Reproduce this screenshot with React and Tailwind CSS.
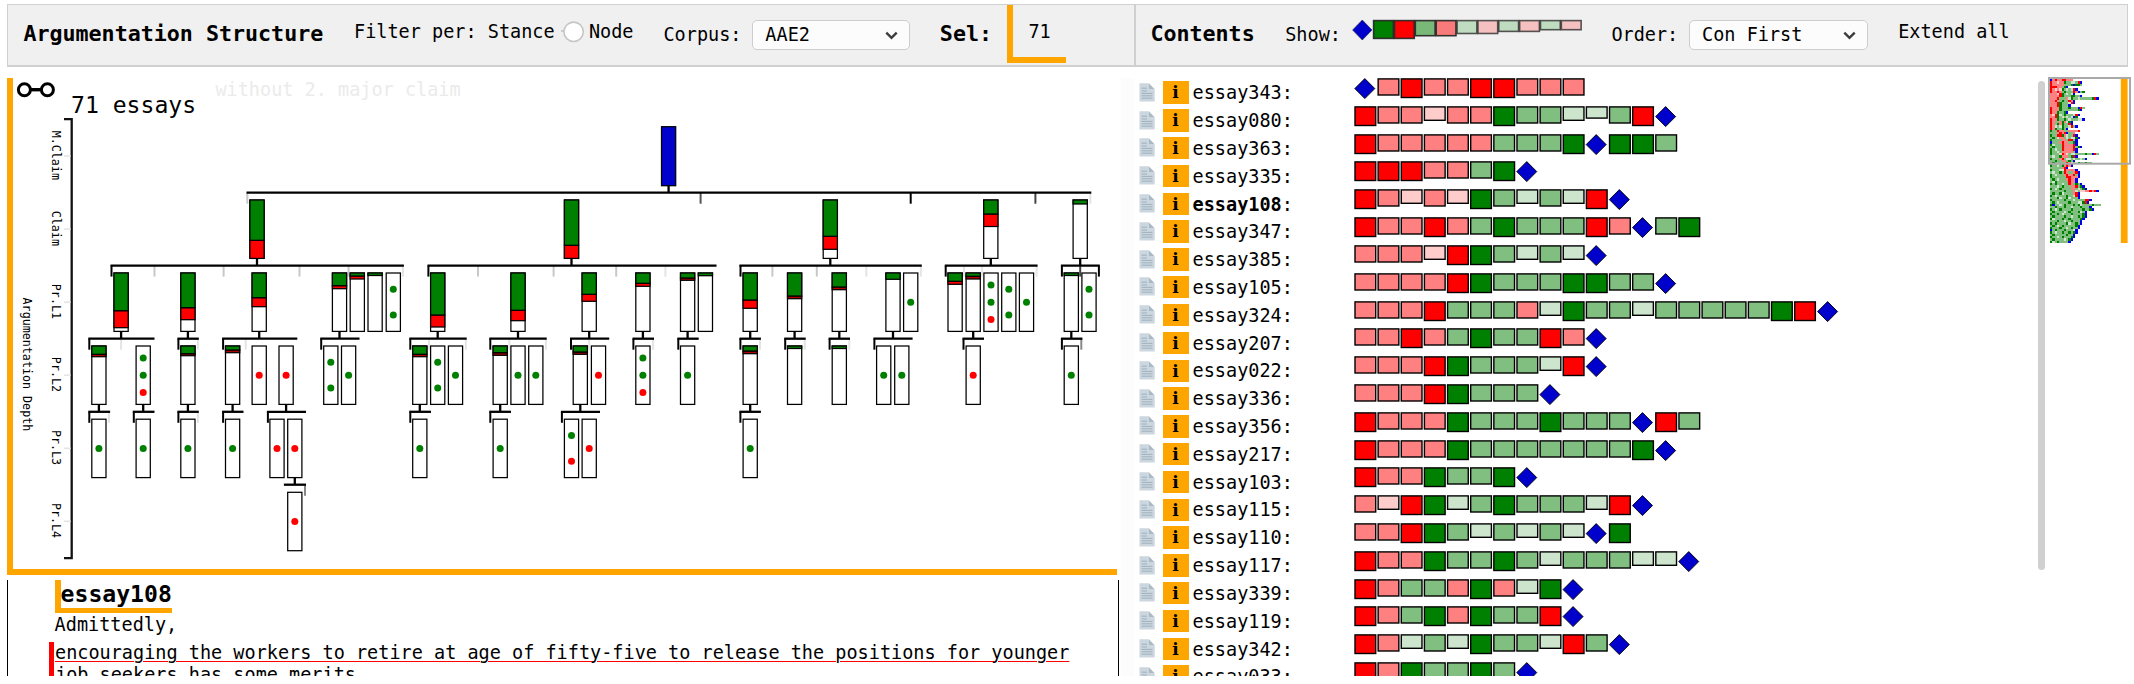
import React from "react";

const MONO = "font-['DejaVu_Sans_Mono',monospace]";

const GLYPHS = {
  R: ["#ff0000", 19.2],
  r: ["#ff8080", 16.7],
  p: ["#ffcccc", 14],
  G: ["#008000", 19.2],
  g: ["#80bf80", 16.7],
  q: ["#cce5cc", 14],
  s: ["#cce5cc", 11.8],
};

const ESSAYS = [
  ["343", "DrRrrRRrrr"],
  ["080", "RrrprrGggqsgRD"],
  ["363", "RrrrrrgggGDGGg"],
  ["335", "RRRrrgGD"],
  ["108", "RrprpGgqgqRD"],
  ["347", "RrrRrgGgggRrDgG"],
  ["385", "rrrpRGgqgqD"],
  ["105", "rrrrRGgggGGggD"],
  ["324", "rrrRgggrqGggqgggggGRD"],
  ["207", "rrRrgGggRrD"],
  ["022", "rrrRGgggqRD"],
  ["336", "rrrRGgggD"],
  ["356", "RrrrGgggGgggDRg"],
  ["217", "RrrrGgggggggGD"],
  ["103", "RrrGggGD"],
  ["115", "rpRGqgGgggqRD"],
  ["110", "rrRGgqgqgqDG"],
  ["117", "RrrGggGgqgggqqD"],
  ["339", "RrggrGrqGD"],
  ["119", "RrgGrGggRD"],
  ["342", "RrqgqGggqRgD"],
  ["033", "RrGggGgD"],
];

const MORE = [
  "GggRrrggrrrrR", "gggrRrRDggr", "GggRRGrqggRD", "gGgqrrgqgqqGD", "GggggrrgRRgD",
  "DgggrRrrggGD", "GqgggRrrrrRD", "gGgggRrrrrRgGD", "GgqggRrrrrRD", "GggqgrrrrrgD",
  "GgggpRrpgqqggggGggDRg", "gqggGrrrgGRD", "GgggrRgqqgqggqgD", "ggGggrrgGgD", "gGgggggRrqgqGggGgg",
  "GggqgGrRrD", "gggggrRD", "GgggqqRrrrrD", "gqggGgRrggrRD", "GgqgggrRrrRgD",
  "GggggggRRrrrD", "gGgqgggrRrrD", "gqGgggggRrrD", "GgGggqggRrgGgD", "gggqgGgggrrRgGD",
  "GgqgGggggrrgqgGD", "ggggggGgggrqgpprrRrRD", "gGggGqggggrRD", "GgqggggGggqRD", "gggGqggGqgggD",
  "GgggggGgggqggggRRD", "gGgqggggGgggqqGRD", "GDggqgGgggGgGqggggGggg", "ggGgggGggqgggGgggD", "GgqgGggggGggggGggGD",
  "gGggggqgGgggGqgD", "GggGgqgggGggggGD", "gGggggGggqggGgGD", "GqgggGggGggggGD", "gggGggqggGgggD",
  "GgGggggGqggGgD", "gGgqgGgggggGD", "GgggGggqgGggD", "DgGgggGgggqD", "GgqggGggGgGD",
  "gGgggggGggD", "GggqgGgggGD", "gGggggqgGD", "GqgGggggD",
];

const MINI = { R: "#ff0000", r: "#ff8080", p: "#ffcccc", G: "#008000", g: "#80bf80", q: "#cce5cc", s: "#cce5cc", D: "#0000ee" };

const LEGEND = [
  ["#008000", 18.3], ["#ff0000", 18.3], ["#7ab87a", 15.6], ["#f87a7a", 15.6], ["#c0dcc0", 13.4],
  ["#f5c0c0", 13.4], ["#c0dcc0", 11.3], ["#f5c0c0", 11.3], ["#c0dcc0", 9.6], ["#f5c0c0", 9.6],
];

/* Level tops of the node bars */
const TOP = [126.7, 200, 273, 346, 419.2, 492.3];
const BAR_H = 58.4;

/* [level, centre x, bottom of green, bottom of red, dots] */
const NODES = [
  [1, 257, 240.3, 258.4], [1, 571.5, 245.3, 258.4], [1, 830.3, 236.3, 249.3], [1, 990.8, 214, 226.5], [1, 1080.2, 204],
  [2, 121.1, 310.7, 327.7], [2, 187.9, 307.7, 319.7], [2, 259.2, 297.7, 306.7], [2, 339.5, 285.7, 288.7],
  [2, 357.3, 276, 279], [2, 375.1, 275.5], [2, 393.3, 0, 0, "gg"], [2, 437.7, 315, 327], [2, 518, 310.3, 320.7],
  [2, 589.2, 294.3, 301.3], [2, 642.9, 283.3, 286.3], [2, 687.6, 278, 280.3], [2, 705.4, 275.7],
  [2, 750.2, 300, 308.3], [2, 794.6, 296, 298.7], [2, 839.3, 287, 289.7], [2, 893, 279.3], [2, 910.7, 0, 0, "g"],
  [2, 955.1, 281.3, 284.3], [2, 973.2, 276.3, 279], [2, 991, 0, 0, "ggr"], [2, 1008.8, 0, 0, "gg"], [2, 1026.5, 0, 0, "g"],
  [2, 1071.3, 275.5], [2, 1089, 0, 0, "gg"],
  [3, 98.9, 354.3, 356.7], [3, 143.2, 0, 0, "ggr"], [3, 187.9, 353.7, 355.7], [3, 232.6, 350, 352.7], [3, 259.2, 0, 0, "r"],
  [3, 286.1, 0, 0, "r"], [3, 330.8, 0, 0, "gg"], [3, 348.6, 0, 0, "g"], [3, 419.8, 354.3, 356.7], [3, 437.7, 0, 0, "gg"],
  [3, 455.5, 0, 0, "g"], [3, 500.2, 352.7, 355.3], [3, 518, 0, 0, "g"], [3, 535.8, 0, 0, "g"], [3, 580.3, 352, 354.3],
  [3, 598.5, 0, 0, "r"], [3, 642.9, 0, 0, "ggr"], [3, 687.6, 0, 0, "g"], [3, 750.2, 351, 353.7], [3, 794.6, 348.5],
  [3, 839.3, 348.5], [3, 883.7, 0, 0, "g"], [3, 901.8, 0, 0, "g"], [3, 973.2, 0, 0, "r"], [3, 1071.3, 0, 0, "g"],
  [4, 98.9, 0, 0, "g"], [4, 143.2, 0, 0, "g"], [4, 187.9, 0, 0, "g"], [4, 232.6, 0, 0, "g"], [4, 277, 0, 0, "r"],
  [4, 294.8, 0, 0, "r"], [4, 419.8, 0, 0, "g"], [4, 500.2, 0, 0, "g"], [4, 571.5, 0, 0, "gr"], [4, 589.2, 0, 0, "r"],
  [4, 750.2, 0, 0, "g"],
  [5, 294.8, 0, 0, "r"],
];

const LINE_Y = [192.7, 265.6, 338.7, 411.8, 484.7];
const K = "#000", L = "#c8c8c8", V = "#e4e4e4", D = "#444";

/* [line level, x start, x end, parent x, ticks as [x, colour]] */
const LINKS = [
  [0, 246.5, 1091.3, 668.6, [[247.3, L], [700.6, "#555"], [910.7, K], [1035.4, D], [1090.3, V]]],
  [1, 110.5, 403.9, 257, [[111.5, K], [154.5, L], [223.6, L], [299.5, L], [348.6, L], [402.9, V]]],
  [1, 427.5, 716.5, 571.5, [[428.4, K], [478, L], [553.6, L], [616.2, L], [665.4, V]]],
  [1, 739.4, 921.8, 830.3, [[740.5, K], [772.4, L], [816.8, L], [866.3, V], [920.8, V]]],
  [1, 944.8, 1037.6, 990.8, [[945.7, K], [964, V], [982.1, V], [1036.6, V]]],
  [1, 1060.9, 1099.8, 1080.2, [[1061.9, K], [1080.2, D], [1098.9, K]]],
  [2, 88.3, 154.5, 121.1, [[89.3, K], [121.1, V]]],
  [2, 177.4, 198.8, 187.9, [[178.4, K], [197.9, V]]],
  [2, 222.1, 297.3, 259.2, [[223.1, K], [245.7, V]]],
  [2, 320.2, 359.5, 339.5, [[321.2, K]]],
  [2, 409.3, 466.7, 437.7, [[410.3, K], [429, V], [465.8, V]]],
  [2, 489.3, 546.7, 518, [[490.3, K], [509.3, V], [545.9, V]]],
  [2, 570, 609.2, 589.2, [[571, K], [589.2, V]]],
  [2, 632.5, 654, 642.9, [[633.4, K], [653.1, V]]],
  [2, 677.3, 698.7, 687.6, [[678.3, K]]],
  [2, 739.4, 760.9, 750.2, [[740.4, K], [760, V]]],
  [2, 784.2, 805.7, 794.6, [[785.2, K], [804.8, V]]],
  [2, 828.6, 850, 839.3, [[829.6, K], [849.3, V]]],
  [2, 873.4, 912.6, 893, [[874.4, K]]],
  [2, 962.5, 984, 973.2, [[963.5, K]]],
  [2, 1060.9, 1082.4, 1071.3, [[1061.9, K], [1081.3, "#888"]]],
  [3, 88.3, 110.1, 98.9, [[89.3, K], [109, V]]],
  [3, 132.8, 154.5, 143.2, [[133.8, K]]],
  [3, 177.4, 198.8, 187.9, [[178.4, K], [197.9, V]]],
  [3, 222.1, 243.5, 232.6, [[223.1, K]]],
  [3, 266.9, 306, 286.1, [[267.9, K]]],
  [3, 409.3, 431, 419.8, [[410.3, K]]],
  [3, 489.3, 511, 500.2, [[490.3, K]]],
  [3, 560.9, 600, 580.3, [[561.9, K]]],
  [3, 739.4, 760.9, 750.2, [[740.4, K]]],
  [4, 283.9, 306, 294.8, [[305, "#888"]]],
];

const DOTS = { 1: [0], 2: [-12.9, 12.9], 3: [-17.2, 0, 17.2] };

function Node({ level, x, green, red, dots }) {
  const top = TOP[level];
  const left = x - 7.1;
  return (
    <g stroke="#000" strokeWidth="1.25">
      <rect x={left} y={top} width="14.2" height={BAR_H} fill="#fff" />
      {red ? <rect x={left} y={green} width="14.2" height={red - green} fill={red - green < 2.9 ? "#b00000" : "#f00"} /> : null}
      {green ? <rect x={left} y={top} width="14.2" height={green - top} fill="#008000" /> : null}
      {dots
        ? DOTS[dots.length].map((dy, i) => (
            <circle key={i} cx={x} cy={top + BAR_H / 2 + dy} r="3.5" stroke="none" fill={dots[i] === "g" ? "#008000" : "#ff0000"} />
          ))
        : null}
    </g>
  );
}

function TreeChart() {
  const mono = "'DejaVu Sans Mono', monospace";
  const levels = ["M.Claim", "Claim", "Pr.L1", "Pr.L2", "Pr.L3", "Pr.L4"];
  return (
    <svg width="1104" height="491" viewBox="13 78 1104 491" className="block">
      <g stroke="#000" fill="none" strokeWidth="3">
        <circle cx="24.4" cy="89.7" r="6" />
        <circle cx="47.4" cy="89.7" r="6" />
        <path d="M30.4 89.7H41.4" strokeWidth="3.4" />
      </g>
      <text x="215.4" y="95.7" fontFamily={mono} fontSize="18.53" fill="#ebebeb">without 2. major claim</text>
      <text x="71" y="113" fontFamily={mono} fontSize="23.1" fill="#000">71 essays</text>

      <path d="M64 119.1H71.7V558.2H64" fill="none" stroke="#111" strokeWidth="2.3" />
      {levels.map((label, i) => (
        <g key={label}>
          <path d={`M64 ${156 + i * 73.05}H71`} stroke="#ddd" strokeWidth="1.2" />
          <text
            transform={`translate(52.4 ${155.3 + i * 73.05}) rotate(90)`}
            fontFamily={mono} fontSize="11.7" textAnchor="middle" fill="#000"
          >
            {label}
          </text>
        </g>
      ))}
      <text transform="translate(23.2 364.4) rotate(90)" fontFamily={mono} fontSize="11.7" textAnchor="middle" fill="#000">
        Argumentation Depth
      </text>

      {LINKS.map(([lvl, x1, x2, px, ticks], i) => (
        <g key={i}>
          {ticks.map(([tx, c], j) => (
            <path key={j} d={`M${tx} ${LINE_Y[lvl]}V${LINE_Y[lvl] + 11}`} stroke={c} strokeWidth="2" />
          ))}
          <path d={`M${px} ${LINE_Y[lvl] - 7.5}V${LINE_Y[lvl]}`} stroke="#000" strokeWidth="2.3" />
          <path d={`M${x1} ${LINE_Y[lvl]}H${x2}`} stroke="#000" strokeWidth="2.3" />
        </g>
      ))}
      <rect x="661.5" y="126.7" width="14.2" height="59" fill="#0000cc" stroke="#000" strokeWidth="1.25" />
      {NODES.map(([level, x, green, red, dots], i) => (
        <Node key={i} level={level} x={x} green={green} red={red} dots={dots} />
      ))}
    </svg>
  );
}

function Strip({ code }) {
  return (
    <svg width="640" height="24" viewBox="0 0 640 24" className="block shrink-0">
      {code.split("").map((c, i) => {
        const x = i * 23.14;
        if (c === "D") {
          const cx = x + 10.8;
          return <path key={i} d={`M${cx} 0.6L${cx + 10} 10.6L${cx} 20.6L${cx - 10} 10.6Z`} fill="#0000cc" stroke="#000" strokeWidth="0.9" />;
        }
        const [fill, h] = GLYPHS[c];
        return <rect key={i} x={x + 1} y="0.9" width="20.7" height={h - 0.6} fill={fill} stroke="#000" strokeWidth="1.4" />;
      })}
    </svg>
  );
}

function PageIcon() {
  return (
    <svg width="16" height="19" viewBox="0 0 16 19" className="block shrink-0">
      <path d="M0.5 0.3H9.8V6.3H15.7V18.6H0.5Z" fill="#cbd6de" />
      <path d="M9.8 0.3L15.7 6.3H9.8Z" fill="#a9bac6" />
      <path d="M2.6 5.2H8M2.6 8H8M2.6 10.4H13.4M2.6 12.8H13.4M2.6 15.2H13.4" stroke="#9fb1be" strokeWidth="1" />
    </svg>
  );
}

function EssayRow({ id, code, active }) {
  return (
    <div className="flex h-[27.82px] shrink-0 items-start">
      <div className="pt-[4.7px]"><PageIcon /></div>
      <div className="mt-[3.4px] ml-[7.2px] h-[22.4px] w-[26px] shrink-0 bg-[#ffa500] text-center font-['DejaVu_Serif',serif] text-[17px] leading-[22px] font-bold text-black">
        i
      </div>
      <div className="mt-[4.3px] ml-[4px] w-[161.3px] shrink-0 text-[18.53px] leading-[22px] whitespace-pre text-black">
        {active ? <b>essay{id}</b> : <>essay{id}</>}:
      </div>
      <Strip code={code} />
    </div>
  );
}

function Select({ label, className }) {
  return (
    <div className={`flex h-[30px] shrink-0 items-center justify-between rounded-[5px] border-[1.5px] border-[#cdcdcd] bg-[#fcfcfc] pr-[11px] pl-[12.5px] ${className}`}>
      <span className="text-[18.53px] leading-[22px] whitespace-pre text-black">{label}</span>
      <svg width="13" height="9" viewBox="0 0 12 8">
        <path d="M1.2 1.4L6 6.2L10.8 1.4" fill="none" stroke="#3c3c3c" strokeWidth="2.2" />
      </svg>
    </div>
  );
}

function Legend() {
  return (
    <svg width="234" height="22" viewBox="0 0 234 22" className="block shrink-0">
      <path d="M10.3 1L20 11L10.3 21L0.6 11Z" fill="#0000cc" stroke="#223" strokeWidth="0.6" />
      {LEGEND.map(([fill, h], i) => (
        <rect key={i} x={21.6 + i * 20.86} y="1.6" width="19.8" height={h - 0.5} fill={fill} stroke="#222" strokeWidth="1.6" strokeOpacity={i > 3 ? 0.75 : 0.9} />
      ))}
    </svg>
  );
}

const LABEL = "shrink-0 text-[18.53px] leading-[22px] whitespace-pre text-black";
const TITLE = "shrink-0 text-[21.67px] leading-[26px] font-bold whitespace-pre text-black";

function Header() {
  return (
    <header className="ml-[7px] flex h-[63px] w-[2121px] items-start border border-b-2 border-[#d0d0d0] bg-[#f0f0f0]">
      <div className="flex h-full w-[1128px] shrink-0 items-start border-r-2 border-[#cfcfcf]">
        <div className={`${TITLE} mt-[15.5px] ml-[15.4px] w-[330.6px]`}>Argumentation Structure</div>
        <div className={`${LABEL} mt-[15.6px] w-[207.5px]`}>Filter per: Stance</div>
        <svg width="24" height="22" viewBox="0 0 24 22" className="mt-[16px] shrink-0">
          <path d="M0 10H3" stroke="#bbb" strokeWidth="1.4" />
          <circle cx="12.6" cy="10.8" r="9.7" fill="#fff" stroke="#c6c6c6" strokeWidth="1.6" />
        </svg>
        <div className={`${LABEL} mt-[15.6px] ml-[3.4px] w-[74.6px]`}>Node</div>
        <div className={`${LABEL} mt-[19px] w-[88.4px]`}>Corpus:</div>
        <Select label="AAE2" className="mt-[15px] w-[158.4px]" />
        <div className={`${TITLE} mt-[15.5px] ml-[29.6px] w-[67.6px]`}>Sel:</div>
        <div className="h-[58px] w-[59px] shrink-0 border-b-[6px] border-l-[6px] border-[#ffa500]">
          <div className={`${LABEL} mt-[15.6px] ml-[15px]`}>71</div>
        </div>
      </div>
      <div className="flex h-full items-start">
        <div className={`${TITLE} mt-[15.5px] ml-[14.4px] w-[134.8px]`}>Contents</div>
        <div className={`${LABEL} mt-[19px] w-[66.6px]`}>Show:</div>
        <div className="mt-[14px]"><Legend /></div>
        <div className={`${LABEL} mt-[19px] ml-[25.6px] w-[77.2px]`}>Order:</div>
        <Select label="Con First" className="mt-[15px] w-[179.2px]" />
        <div className={`${LABEL} mt-[15.6px] ml-[30.4px]`}>Extend all</div>
      </div>
    </header>
  );
}

function EssayText() {
  return (
    <section className="mt-[5px] flex h-[96px] w-[1112.4px] items-start overflow-hidden border-x border-black">
      <div className="pl-[40.6px]">
        <h2 className="ml-[6px] w-fit border-b-[5.7px] border-l-[6px] border-[#ffa500] pt-px text-[23.1px] leading-[27px] font-bold text-black">essay108</h2>
        <p className="ml-[6px] pt-[0.6px] text-[18.53px] leading-[22px] text-black">Admittedly,</p>
        <p className="mt-[6px] w-[1040px] border-l-[5px] border-[#ff0000] pl-[1.4px] text-[18.53px] leading-[22px] whitespace-pre text-black underline decoration-[#ff0000] decoration-[1.4px] underline-offset-[2px]">
          {"encouraging the workers to retire at age of fifty-five to release the positions for younger\njob seekers has some merits"}
        </p>
      </div>
    </section>
  );
}

function Minimap() {
  const rows = [...ESSAYS.map((e) => e[1]), ...MORE];
  const s = 2.31;
  return (
    <svg width="86" height="170" viewBox="2047 76 86 170" className="block shrink-0">
      <g shapeRendering="crispEdges">
        {rows.map((row, y) =>
          row.split("").map((c, x) => (
            <rect key={`${x}-${y}`} x={2050 + x * s} y={79 + y * s} width={s} height={s} fill={MINI[c]} />
          ))
        )}
      </g>
      <rect x="2120.8" y="79" width="6.8" height="164" fill="#ffa500" />
      <rect x="2049" y="78" width="81" height="85.7" fill="none" stroke="#a9a9a9" strokeWidth="2" />
    </svg>
  );
}

export default function App() {
  return (
    <div className={`${MONO} h-[684px] w-[2134px] overflow-hidden bg-white`}>
      <div className="flex h-[676px] flex-col overflow-hidden pt-[4px]">
        <Header />
        <main className="flex min-h-0 flex-1 items-start overflow-hidden pt-[11px]">
          <div className="ml-[7px] w-[1114px] shrink-0">
            <section className="h-[497px] w-[1110px] border-b-[6px] border-l-[6px] border-[#ffa500]">
              <TreeChart />
            </section>
            <EssayText />
          </div>
          <div className="h-[598px] w-[13px] shrink-0 bg-[#fcfcfc]" />
          <div className="ml-[5.4px] flex h-[598px] w-[898.6px] shrink-0 flex-col overflow-hidden">
            {ESSAYS.map(([id, code]) => (
              <EssayRow key={id} id={id} code={code} active={id === "108"} />
            ))}
          </div>
          <div className="mt-[3px] h-[489px] w-[7px] shrink-0 rounded-full bg-[#d0d0d0]" />
          <div className="-mt-[2px] ml-[2px]"><Minimap /></div>
        </main>
      </div>
    </div>
  );
}
